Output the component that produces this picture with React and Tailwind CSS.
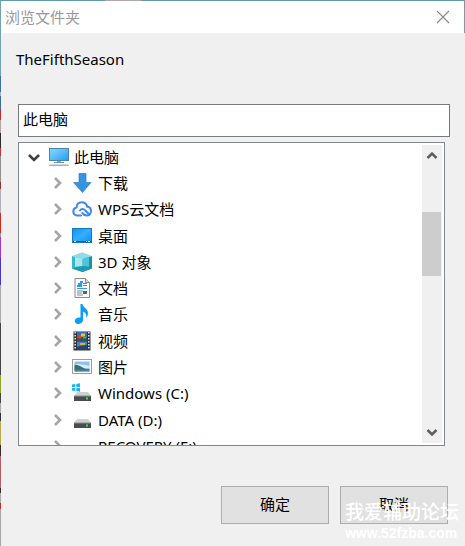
import { useState } from 'react';

const FONT = "font-['Noto_Sans','Noto_Sans_CJK_SC',sans-serif]";

// Slivers of the window behind, visible along the left side
const EDGE = [
  { grow: 'grow-[76]', color: 'bg-[#6fa3ae]' },
  { grow: 'grow-[16]', color: 'bg-[#3d70ab]' },
  { grow: 'grow-[4]', color: 'bg-[#9fb4c8]' },
  { grow: 'grow-[14]', color: 'bg-[#3f6ba0]' },
  { grow: 'grow-[10]', color: 'bg-[#c22d2d]' },
  { grow: 'grow-[13]', color: 'bg-[#b3a3a3]' },
  { grow: 'grow-[15]', color: 'bg-[#2b2b2b]' },
  { grow: 'grow-[8]', color: 'bg-[#c43a3a]' },
  { grow: 'grow-[26]', color: 'bg-[#8f8f8f]' },
  { grow: 'grow-[7]', color: 'bg-[#a33226]' },
  { grow: 'grow-[24]', color: 'bg-[#aeb1b8]' },
  { grow: 'grow-[20]', color: 'bg-[#d22a1e]' },
  { grow: 'grow-[4]', color: 'bg-[#9a9a9a]' },
  { grow: 'grow-[21]', color: 'bg-[#a33ac9]' },
  { grow: 'grow-[27]', color: 'bg-[#4436cf]' },
  { grow: 'grow-[38]', color: 'bg-[#aaaaaa]' },
  { grow: 'grow-[52]', color: 'bg-[#444444]' },
  { grow: 'grow-[18]', color: 'bg-[#8ea32c]' },
  { grow: 'grow-[10]', color: 'bg-[#444444]' },
  { grow: 'grow-[10]', color: 'bg-[#aaaaaa]' },
  { grow: 'grow-[8]', color: 'bg-[#333333]' },
  { grow: 'grow-[24]', color: 'bg-[#b3a94c]' },
  { grow: 'grow-[11]', color: 'bg-[#2f2f2f]' },
  { grow: 'grow-[32]', color: 'bg-[#b76068]' },
  { grow: 'grow-[5]', color: 'bg-[#2f2f2f]' },
  { grow: 'grow-[10]', color: 'bg-[#aaaaaa]' },
  { grow: 'grow-[6]', color: 'bg-[#cc2b2b]' },
  { grow: 'grow-[37]', color: 'bg-[#a6a6a6]' },
];

function Svg({ children }) {
  return (
    <svg viewBox="0 0 20 20" className="h-5 w-5 shrink-0" aria-hidden="true">
      {children}
    </svg>
  );
}

function ComputerIcon() {
  return (
    <svg viewBox="0 0 22 20" className="h-5 w-[22px] shrink-0" aria-hidden="true">
      <defs>
        <linearGradient id="screen" x1="0" y1="0" x2="1" y2="1">
          <stop offset="0" stopColor="#8bd6ff" />
          <stop offset="0.5" stopColor="#5bbcf8" />
          <stop offset="1" stopColor="#1f9cf0" />
        </linearGradient>
      </defs>
      <rect x="1.500" y="1.500" width="19" height="12" fill="url(#screen)" stroke="#4a86ad" />
      <path d="M9 14h4v1H9z" fill="#8fa9bb" />
      <path d="M6 15h10v1H6z" fill="#6f93ab" />
      <path d="M2 17.500h18l1 1.500H1z" fill="#9fb0c0" />
    </svg>
  );
}

function DownloadIcon() {
  return (
    <Svg>
      <path d="M7 .5h7v9h5L10.500 19.500 1.500 9.500H7z" fill="#3793e0" stroke="#2a80cc" strokeWidth=".7" />
    </Svg>
  );
}

function CloudIcon() {
  return (
    <Svg>
      <g fill="none" stroke="#4285f4" strokeWidth="2" strokeLinecap="round" strokeLinejoin="round">
        <path d="M9 16.500H5a4 4 0 0 1-.5-7.900C4.800 5.200 7 3.200 9.800 3.200c2.700 0 4.700 1.600 5.400 4.300" />
        <path d="M8 11.500c1.500-2 3.500-2 5-.3l4.500 4.500" />
        <path d="M15.200 7.500c2.300.5 3.800 2.300 3.800 4.500 0 2.500-2 4.500-4.500 4.500-1.800 0-2.700-.7-4.200-2.500" />
      </g>
    </Svg>
  );
}

function DesktopIcon() {
  return (
    <Svg>
      <defs>
        <linearGradient id="desk" x1="0" y1="0" x2="1" y2="1">
          <stop offset="0" stopColor="#0c95f6" />
          <stop offset="0.5" stopColor="#35adff" />
          <stop offset="1" stopColor="#0a91f2" />
        </linearGradient>
      </defs>
      <rect x=".5" y="2.500" width="19" height="14" fill="url(#desk)" stroke="#1778bd" />
      <path d="M1 15h18v1H1z" fill="#0c5c9c" />
      <path d="M2 15h2v1H2zM14 15h1v1h-1zM16 15h2v1h-2z" fill="#fff" />
    </Svg>
  );
}

function CubeIcon() {
  return (
    <Svg>
      <path d="M0 4 10 .3 20 4l-9.500 3z" fill="#8fdbe8" />
      <path d="M0 4 10.500 7v13L0 16.500z" fill="#37b6cc" />
      <path d="M10.500 7 20 4v12.500L10.500 20z" fill="#1795ad" />
      <path d="m3 4.900 7.500 2.100V14L3 14.800z" fill="#a5e8f0" />
      <path d="M10.500 7 17 5v9.800L10.500 14z" fill="#4cc5d6" />
      <path d="m0 16.500 10.500-2.500 9.500 2.500-9.500 3.500z" fill="#2298b4" />
    </Svg>
  );
}

function DocumentIcon() {
  return (
    <Svg>
      <path d="M3 .5h10.500L17.500 4.500v15H3z" fill="#fafafa" stroke="#858b91" />
      <path d="M13.500.5v4h4" fill="#dcdcdc" stroke="#858b91" />
      <path d="M8 3h3v2H8zM6 5h4v2H6zM5 7h5v2H5zM11 5h4v1h-4zM11 7h4v1h-4zM5 10h10v1H5z" fill="#2f9be8" />
      <path d="M5 12.500h6v1H5zM5 14.500h5v1H5zM5 16.500h6v1H5z" fill="#7b8b99" />
      <path d="M11 13h4v3h-4z" fill="#4b657a" />
    </Svg>
  );
}

function MusicIcon() {
  return (
    <Svg>
      <path
        d="M8.500 0h2c.3 3.500 5.500 4.600 5.500 8.900 0 1.900-.7 3.500-1.800 5 .6-3.600-.9-5.400-3.200-6.200v8.400c0 2.300-2 3.900-4.300 3.900-2.300 0-3.900-1.200-3.900-3.100 0-2.200 2.200-3.900 5.700-3.400z"
        fill="#0c9cf2"
      />
    </Svg>
  );
}

function VideoIcon() {
  return (
    <Svg>
      <path d="M1.500.5h17v19h-17z" fill="#343434" />
      <path d="M5 1h10v8.500H5z" fill="#356fc4" />
      <path d="M5 10.500h10V19H5z" fill="#3d82d8" />
      <path d="M5 7c3-1 6-1 10 0v2.500H5z" fill="#31593a" />
      <path d="M5 16c3-2 6-1 10-2v5H5z" fill="#23466e" />
      <path d="M9 2.500h4v3H9z" fill="#f2c230" />
      <path d="M6 4.500h3v3H6z" fill="#d84630" />
      <path d="M11 5.500h3v2h-3z" fill="#58aa3b" />
      <path d="M8 12h5v2H8z" fill="#e8a933" />
      <path d="M3.200 1v18M16.800 1v18" stroke="#e6e6e6" strokeWidth="1.500" strokeDasharray="1.500 1.500" />
    </Svg>
  );
}

function PictureIcon() {
  return (
    <Svg>
      <rect x=".5" y="2.500" width="19" height="14" fill="#fff" stroke="#979ea3" />
      <path d="M2.500 4.500h15v10h-15z" fill="#8cc0f0" />
      <path d="M2.500 7c5 0 10 .5 15 2v2h-15z" fill="#d9edf7" />
      <path d="M2.500 7.500c4 .3 7 2.300 11 4.500l4 .5v1h-15z" fill="#3a7064" />
      <path d="M2.500 12.500h15v2h-15z" fill="#477ca8" />
    </Svg>
  );
}

function DriveIcon({ system }) {
  return (
    <Svg>
      {system && (
        <path d="M0 1.500 3.300 1v3H0zM4.300.9 8 .3V4H4.300zM0 5h3.300v3L0 7.500zM4.300 5H8v3.700l-3.700-.6z" fill="#1cb4ee" />
      )}
      <path d="M5 9h11l3 4H2z" fill="#cfd1d2" />
      <path d="M2 13h17v5H2z" fill="#4a4d4f" />
      <path d="M2 12.500h17v1H2z" fill="#8b8e90" />
      <path d="M14 14.500h2v2h-2z" fill="#3fe04d" />
    </Svg>
  );
}

const ITEMS = [
  { name: '下载', icon: <DownloadIcon /> },
  { name: 'WPS云文档', icon: <CloudIcon /> },
  { name: '桌面', icon: <DesktopIcon /> },
  { name: '3D 对象', icon: <CubeIcon /> },
  { name: '文档', icon: <DocumentIcon /> },
  { name: '音乐', icon: <MusicIcon /> },
  { name: '视频', icon: <VideoIcon /> },
  { name: '图片', icon: <PictureIcon /> },
  { name: 'Windows (C:)', icon: <DriveIcon system /> },
  { name: 'DATA (D:)', icon: <DriveIcon /> },
  { name: 'RECOVERY (E:)', icon: <DriveIcon /> },
];

function Chevron({ d, color }) {
  return (
    <svg viewBox="0 0 12 12" className="h-3 w-3" fill="none" stroke={color} strokeWidth="2.600" aria-hidden="true">
      <path d={d} />
    </svg>
  );
}

export default function App() {
  const [folder, setFolder] = useState('此电脑');
  const [open, setOpen] = useState(true);

  return (
    <div className={`flex min-h-screen bg-[#f0f0f0] text-[15px] leading-5 text-black ${FONT}`}>
      <div className="flex w-px shrink-0 flex-col">
        {EDGE.map((e, i) => (
          <div key={i} className={`${e.grow} ${e.color}`} />
        ))}
      </div>

      <main className="relative flex min-w-0 flex-1 flex-col">
        <div className="flex h-px bg-[#5f9ab1] pl-[104px]">
          <div className="w-9 bg-[#b3a5ab]" />
        </div>
        <header className="flex h-8 items-center justify-between border-r border-[#6c9fb0] bg-white pr-3.5 pb-px pl-1">
          <h1 className="text-[#999999]">浏览文件夹</h1>
          <button type="button" aria-label="关闭" className="text-[#8a8a8a]">
            <svg viewBox="0 0 14 14" className="h-3.5 w-3.5" fill="none" stroke="currentColor" strokeWidth="1.100">
              <path d="m1 1 12 12M13 1 1 13" />
            </svg>
          </button>
        </header>

        <label htmlFor="folder" className="mt-4 ml-[15px]">TheFifthSeason</label>

        <input
          id="folder"
          type="text"
          value={folder}
          onChange={(e) => setFolder(e.target.value)}
          className="mt-[35px] mr-[15px] ml-[17px] h-[33px] border border-[#7a7a7a] bg-white px-1 pb-1 outline-none"
        />

        <div className="mt-[5px] mr-5 ml-[17px] flex h-[304px] border border-[#828790] bg-white px-0.5 pt-0.5">
          <div className="min-w-0 flex-1 overflow-hidden">
            <div className="flex h-[25px] items-center pb-px">
              <button type="button" aria-label="展开此电脑" onClick={() => setOpen(!open)} className="mr-2 ml-[7px]">
                <Chevron d="m1 4 5 5 5-5" color="#404040" />
              </button>
              <ComputerIcon />
              <span className="ml-1">此电脑</span>
            </div>
            {open && (
              <ul className="grid h-[289px] auto-rows-fr">
                {ITEMS.map((item) => (
                  <li key={item.name} className="flex items-center">
                    <button type="button" aria-label={`展开${item.name}`} className="mr-2 ml-[31px]">
                      <Chevron d="m3 1 5 5-5 5" color="#a6a6a6" />
                    </button>
                    {item.icon}
                    <span className="ml-1.5 whitespace-nowrap">{item.name}</span>
                  </li>
                ))}
              </ul>
            )}
          </div>
          <div className="mb-0.5 flex w-5 shrink-0 flex-col items-center bg-[#f0f0f0]">
            <button type="button" aria-label="向上滚动" className="flex h-[22px] items-center">
              <Chevron d="m1.500 8 4.500-4.500L10.500 8" color="#606060" />
            </button>
            <div className="flex w-full flex-1 flex-col">
              <div className="grow-[45]" />
              <div className="mr-px h-16 bg-[#cdcdcd]" />
              <div className="grow-[145]" />
            </div>
            <button type="button" aria-label="向下滚动" className="flex h-[22px] items-center">
              <Chevron d="m1.500 4 4.500 4.500L10.500 4" color="#606060" />
            </button>
          </div>
        </div>

        <footer className="mt-10 mr-[17px] flex justify-end gap-[11px]">
          <button type="button" className="h-[38px] w-[108px] border border-[#adadad] bg-[#e1e1e1] pb-0.5">确定</button>
          <button type="button" className="h-[38px] w-[108px] border border-[#adadad] bg-[#e1e1e1] pb-0.5">取消</button>
        </footer>

        <div className="pointer-events-none absolute right-1.5 bottom-1 text-white">
          <p className="text-[19px] leading-6 font-medium">我爱辅助论坛</p>
          <p className="font-['Liberation_Sans',sans-serif] text-[14px] leading-[18px] font-bold">www.52fzba.com</p>
        </div>
      </main>
    </div>
  );
}
